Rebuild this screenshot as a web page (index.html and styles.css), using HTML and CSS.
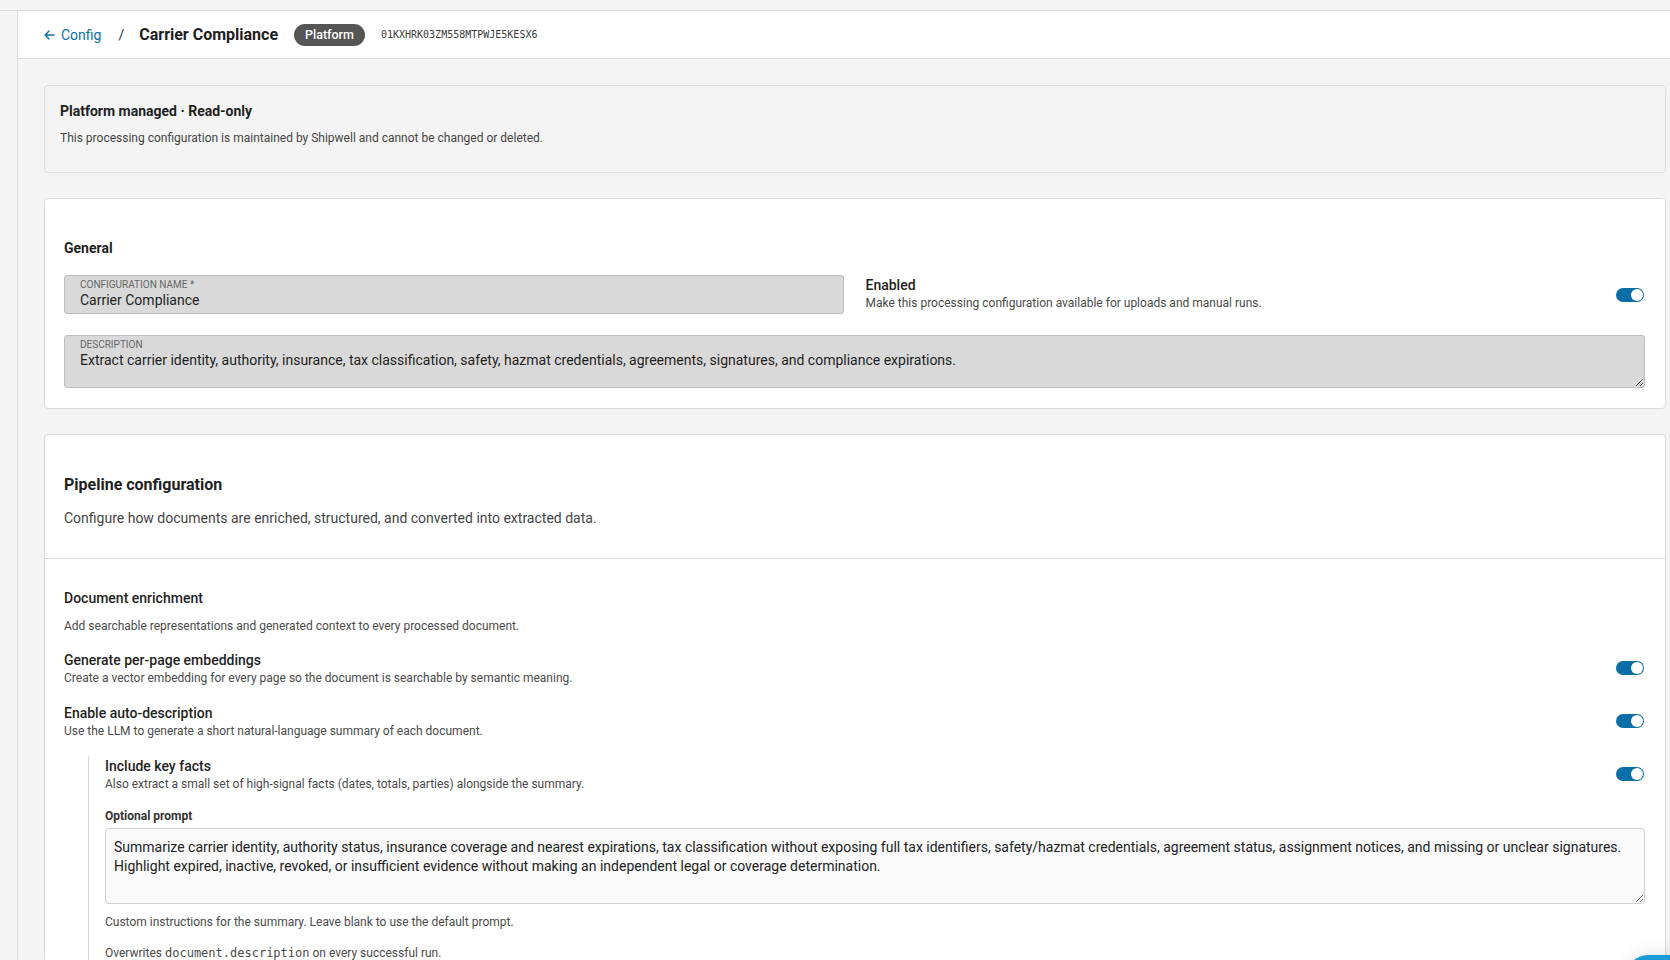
FILE: index.html
```html
<!DOCTYPE html>
<html lang="en">
<head>
  <meta charset="UTF-8" />
  <meta name="viewport" content="width=device-width, initial-scale=1.0"/>
  <title>Carrier Compliance · Config</title>
  <link rel="stylesheet" href="styles.css">
</head>
<body>
  <div class="topbar"></div>

  <div class="shell">
    <aside class="rail"></aside>

    <main class="main">
      <header class="pagebar">
        <a class="back" href="#">
          <svg width="11" height="10" viewBox="0 0 11 10" aria-hidden="true">
            <path d="M10 5H1.5M5 1 1.2 5 5 9" fill="none" stroke="currentColor" stroke-width="1.4" stroke-linecap="round" stroke-linejoin="round"/>
          </svg>
          Config
        </a>
        <span class="crumb-sep">/</span>
        <h1 class="page-title">Carrier Compliance</h1>
        <span class="badge">Platform</span>
        <code class="config-id">01KXHRK03ZM558MTPWJE5KESX6</code>
      </header>

      <div class="content">
        <section class="card card-notice">
          <h2 class="notice-title">Platform managed · Read-only</h2>
          <p class="notice-text">This processing configuration is maintained by Shipwell and cannot be changed or deleted.</p>
        </section>

        <section class="card card-general">
          <h2 class="section-title">General</h2>
          <div class="general-row">
            <div class="field">
              <span class="field-label">Configuration name *</span>
              <span class="field-value">Carrier Compliance</span>
            </div>
            <div class="switch-row switch-enabled">
              <div class="switch-text">
                <div class="switch-title">Enabled</div>
                <div class="switch-desc">Make this processing configuration available for uploads and manual runs.</div>
              </div>
              <span class="toggle on"></span>
            </div>
          </div>
          <div class="field field-area">
            <span class="field-label">Description</span>
            <span class="field-value">Extract carrier identity, authority, insurance, tax classification, safety, hazmat credentials, agreements, signatures, and compliance expirations.</span>
          </div>
        </section>

        <section class="card card-pipeline">
          <div class="pipeline-head">
            <h2 class="pipeline-title">Pipeline configuration</h2>
            <p class="pipeline-desc">Configure how documents are enriched, structured, and converted into extracted data.</p>
          </div>

          <div class="pipeline-body">
            <h3 class="group-title">Document enrichment</h3>
            <p class="group-desc">Add searchable representations and generated context to every processed document.</p>

            <div class="switch-row">
              <div class="switch-text">
                <div class="switch-title">Generate per-page embeddings</div>
                <div class="switch-desc">Create a vector embedding for every page so the document is searchable by semantic meaning.</div>
              </div>
              <span class="toggle on"></span>
            </div>

            <div class="switch-row">
              <div class="switch-text">
                <div class="switch-title">Enable auto-description</div>
                <div class="switch-desc">Use the LLM to generate a short natural-language summary of each document.</div>
              </div>
              <span class="toggle on"></span>
            </div>

            <div class="nested">
              <div class="switch-row">
                <div class="switch-text">
                  <div class="switch-title">Include key facts</div>
                  <div class="switch-desc">Also extract a small set of high-signal facts (dates, totals, parties) alongside the summary.</div>
                </div>
                <span class="toggle on"></span>
              </div>

              <label class="prompt-label" for="prompt">Optional prompt</label>
              <textarea id="prompt" class="prompt" readonly>Summarize carrier identity, authority status, insurance coverage and nearest expirations, tax classification without exposing full tax identifiers, safety/hazmat credentials, agreement status, assignment notices, and missing or unclear signatures.
Highlight expired, inactive, revoked, or insufficient evidence without making an independent legal or coverage determination.</textarea>
              <p class="hint">Custom instructions for the summary. Leave blank to use the default prompt.</p>
              <p class="hint hint-gap">Overwrites <code>document.description</code> on every successful run.</p>
            </div>
          </div>
        </section>
      </div>
    </main>
  </div>

  <button class="fab" type="button" aria-label="Save"></button>
</body>
</html>
```

FILE: styles.css
```css
* {
  box-sizing: border-box;
}

body {
  margin: 0;
  background: #f4f4f4;
  font-family: Roboto, 'Liberation Sans', sans-serif;
  color: #1f1f1f;
  overflow: hidden;
}

h1, h2, h3, p {
  margin: 0;
}

.topbar {
  height: 11px;
  background: #f4f4f4;
  border-bottom: 1px solid #dedede;
}

.shell {
  display: flex;
  min-height: calc(100vh - 11px);
}

.rail {
  width: 18px;
  flex: none;
  background: #f4f4f4;
  border-right: 1px solid #dedede;
}

.main {
  flex: 1;
  min-width: 0;
}

/* page header with breadcrumb */
.pagebar {
  height: 48px;
  background: #fff;
  border-bottom: 1px solid #dedede;
  display: flex;
  align-items: center;
  padding-left: 26px;
}

.back {
  display: flex;
  align-items: center;
  gap: 6px;
  color: #0b6fa8;
  text-decoration: none;
  font-size: 14px;
}

.crumb-sep {
  margin: 0 15px 0 17px;
  color: #333;
  font-size: 14px;
}

.page-title {
  font-size: 16px;
  font-weight: 700;
  color: #1c1c1c;
}

.badge {
  margin-left: 16px;
  background: #555;
  color: #fff;
  font-size: 12.5px;
  font-weight: 500;
  height: 22px;
  line-height: 22px;
  padding: 0 11px;
  border-radius: 11px;
}

.config-id {
  margin-left: 16px;
  font-family: 'DejaVu Sans Mono', 'Liberation Mono', monospace;
  font-size: 10px;
  color: #3a3a3a;
}

.content {
  padding: 26px 4px 0 26px;
  display: flex;
  flex-direction: column;
  gap: 25px;
}

.card {
  background: #fff;
  border: 1px solid #dcdcdc;
  border-radius: 4px;
}

/* read-only notice */
.card-notice {
  background: #f4f4f4;
  height: 88px;
  padding: 17px 15px 0;
}

.notice-title {
  font-size: 14px;
  font-weight: 700;
  line-height: 16px;
}

.notice-text {
  margin-top: 11px;
  font-size: 12px;
  line-height: 16px;
  color: #444;
}

/* general settings */
.card-general {
  padding: 39px 20px 20px 19px;
}

.section-title {
  font-size: 14px;
  font-weight: 700;
  line-height: 20px;
}

.general-row {
  margin-top: 17px;
  display: grid;
  grid-template-columns: 1fr 1fr;
  gap: 22px;
  align-items: center;
}

.field {
  display: flex;
  flex-direction: column;
  background: #d9d9d9;
  border: 1px solid #bdbdbd;
  border-radius: 3px;
  padding: 3px 15px 4px;
}

.field-label {
  font-size: 10px;
  line-height: 12px;
  text-transform: uppercase;
  color: #666;
}

.field-value {
  font-size: 14px;
  line-height: 18px;
  color: #1f1f1f;
}

.field-area {
  margin-top: 21px;
  height: 53px;
  resize: vertical;
  overflow: auto;
  padding-top: 3px;
}

.switch-row {
  display: flex;
  align-items: center;
  justify-content: space-between;
  gap: 20px;
}

.switch-enabled .switch-text {
  margin-top: -3px;
}

.switch-title {
  font-size: 14px;
  font-weight: 500;
  line-height: 20px;
  color: #1f1f1f;
}

.switch-desc {
  font-size: 12px;
  line-height: 16px;
  color: #4a4a4a;
}

.toggle {
  flex: none;
  position: relative;
  width: 28px;
  height: 14px;
  border-radius: 7px;
  background: #0b6ea6;
  margin-right: 1px;
}

.toggle.on::after {
  content: "";
  position: absolute;
  top: 1px;
  right: 1px;
  width: 12px;
  height: 12px;
  border-radius: 50%;
  background: #fff;
}

/* pipeline */
.pipeline-head {
  padding: 39px 20px 30px 19px;
  border-bottom: 1px solid #dcdcdc;
}

.pipeline-title {
  font-size: 16px;
  font-weight: 700;
  line-height: 22px;
}

.pipeline-desc {
  margin-top: 12px;
  font-size: 14px;
  line-height: 20px;
  color: #444;
}

.pipeline-body {
  padding: 29px 20px 0 19px;
  display: flex;
  flex-direction: column;
}

.group-title {
  font-size: 14px;
  font-weight: 500;
  line-height: 20px;
}

.group-desc {
  margin-top: 10px;
  margin-bottom: 16px;
  font-size: 12px;
  line-height: 16px;
  color: #4a4a4a;
}

.pipeline-body > .switch-row + .switch-row {
  margin-top: 17px;
}

.nested {
  margin: 17px 0 0 24px;
  padding-left: 16px;
  border-left: 1px solid #d6d6d6;
  display: flex;
  flex-direction: column;
}

.prompt-label {
  margin-top: 16px;
  font-size: 12px;
  font-weight: 700;
  line-height: 16px;
  color: #333;
}

.prompt {
  margin-top: 4px;
  height: 76px;
  width: 100%;
  padding: 9px 8px;
  font-family: Roboto, 'Liberation Sans', sans-serif;
  font-size: 14px;
  line-height: 19px;
  color: #222;
  background: #fafafa;
  border: 1px solid #d0d0d0;
  border-radius: 4px;
  resize: vertical;
}

.hint {
  margin-top: 10px;
  font-size: 12px;
  line-height: 16px;
  color: #4a4a4a;
}

.hint-gap {
  margin-top: 15px;
}

.hint code {
  font-family: 'DejaVu Sans Mono', 'Liberation Mono', monospace;
  font-size: 12px;
}

/* floating save button */
.fab {
  position: fixed;
  left: 1626px;
  top: 955px;
  width: 110px;
  height: 44px;
  border: none;
  border-radius: 22px;
  background: #1b9ad6;
  box-shadow: 0 0 18px rgba(0, 0, 0, 0.12);
}
```
